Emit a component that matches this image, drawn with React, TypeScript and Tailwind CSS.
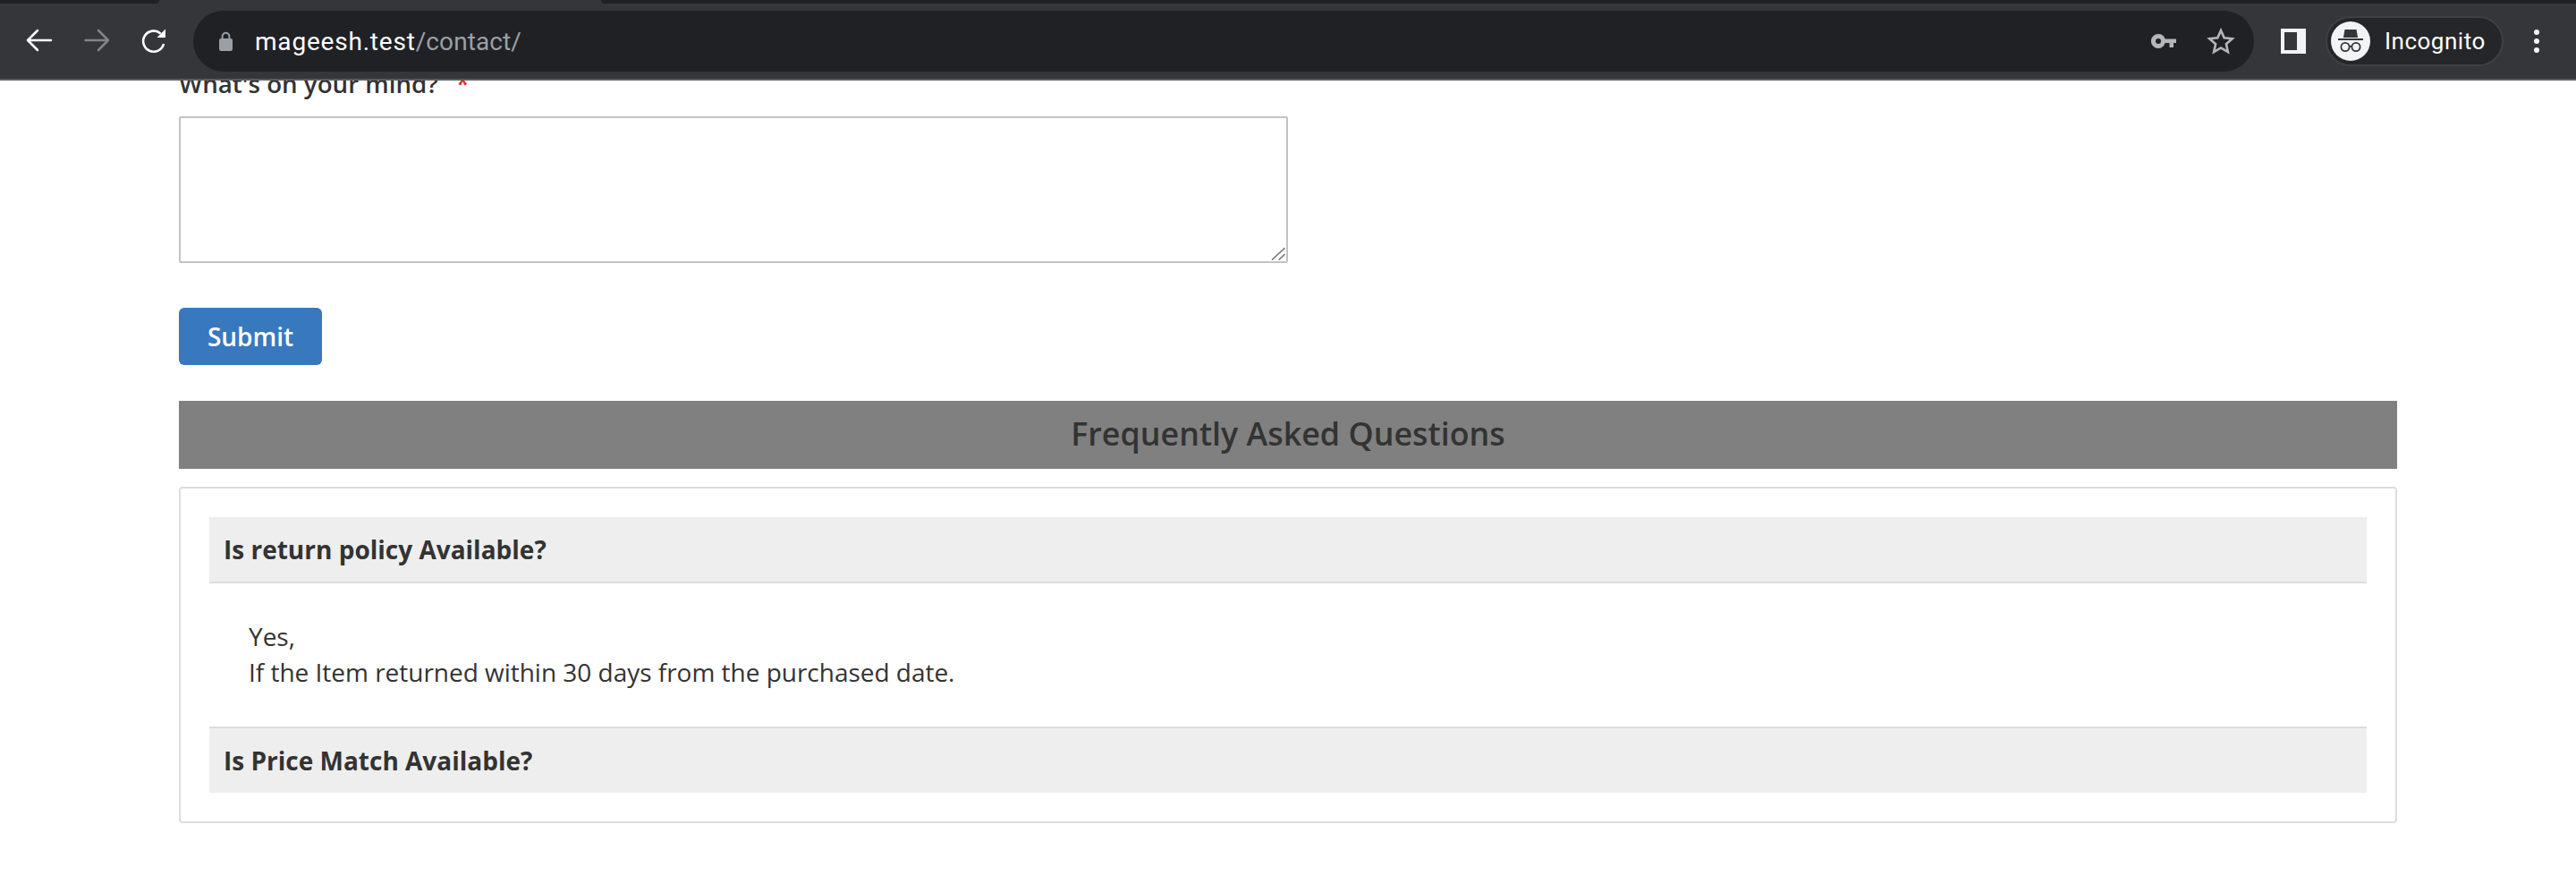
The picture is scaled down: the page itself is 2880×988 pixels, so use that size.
export default function App() {
  return (
    <div className="relative h-[988px] w-[2880px] overflow-hidden bg-white font-['Open_Sans',sans-serif] text-[#333333]">
      <header className="relative z-10 h-[90px] border-b-2 border-[#5b5c5f] bg-[#35363a]">
        <div className="flex h-[4px]">
          <div className="h-full w-[178px] rounded-br-[8px] bg-[#202124]" />
          <div className="ml-auto h-full w-[2208px] rounded-bl-[8px] bg-[#202124]" />
        </div>
        <div className="mt-[8px] flex h-[68px] items-center pl-3 pr-[41px]">
          <div className="flex h-full w-16 items-center justify-center">
            <svg width="32" height="28" viewBox="0 0 32 28" fill="none" stroke="#ffffff" strokeWidth="2.5" strokeLinecap="round" strokeLinejoin="round">
              <path d="M3 13h26M14 2 3 13l11 11" />
            </svg>
          </div>
          <div className="flex h-full w-16 items-center justify-center">
            <svg width="32" height="28" viewBox="0 0 32 28" fill="none" stroke="#84858a" strokeWidth="2.5" strokeLinecap="round" strokeLinejoin="round">
              <path d="M3.5 13H29M18 2l11 11-11 11" />
            </svg>
          </div>
          <div className="flex h-full w-16 items-center justify-center pl-[2px]">
            <svg width="32" height="32" viewBox="0 0 32 32" fill="none">
              <path d="M22.6 7.6A11.6 11.6 0 1 0 26 19" stroke="#ffffff" strokeWidth="2.6" />
              <path d="M28 2.5V12H18.5L28 2.5Z" fill="#ffffff" />
            </svg>
          </div>
          <div className="ml-3 flex h-full flex-1 items-center rounded-full bg-[#202124] pl-[29px] pr-[21px] font-['Roboto',sans-serif]">
            <svg width="15" height="22" viewBox="0 0 15 22" fill="#9aa0a6">
              <path d="M2.6 8V5.6a4.9 4.9 0 0 1 9.8 0V8h.6A2 2 0 0 1 15 10v10a2 2 0 0 1-2 2H2a2 2 0 0 1-2-2V10a2 2 0 0 1 2-2h.6Zm2 0h5.8V5.6a2.9 2.9 0 0 0-5.8 0V8Z" />
            </svg>
            <span className="ml-[25px] whitespace-nowrap pt-[1px] text-[28px] leading-[36px] tracking-[0.8px] text-white">
              mageesh.test<span className="tracking-[0.1px] text-[#9aa0a6]">/contact/</span>
            </span>
            <svg className="ml-auto" width="28" height="16" viewBox="0 0 28 16" fill="#b5b6b8">
              <path fillRule="evenodd" d="M8 0a8 8 0 0 1 7.6 5.5H28V10h-3v5h-4.5v-5h-4.9A8 8 0 1 1 8 0Zm0 5a3 3 0 1 0 0 6 3 3 0 0 0 0-6Z" />
            </svg>
            <svg className="ml-[34px]" width="32" height="30" viewBox="0 0 32 30" fill="none" stroke="#b5b6b8" strokeWidth="2.6" strokeLinejoin="miter">
              <path d="m16 3 3.7 8.3 9 .9-6.8 6 2 8.9L16 22.5l-7.9 4.6 2-8.9-6.8-6 9-.9L16 3Z" />
            </svg>
          </div>
          <div className="ml-[30px] flex h-[28px] w-[28px] justify-start bg-[#f1f3f4] pl-[4px] pt-[4px]">
            <div className="h-[20px] w-[14px] bg-[#35363a]" />
          </div>
          <div className="ml-[22px] flex h-[56px] w-[199px] items-center rounded-full border-2 border-[#3f4044] bg-[#252629] pl-[4px] font-['Roboto',sans-serif]">
            <div className="flex h-[44px] w-[44px] items-center justify-center rounded-full bg-[#f1f3f4]">
              <svg width="30" height="34" viewBox="0 0 30 34" fill="none">
                <path d="M8.5 4h13l1.6 9H6.9L8.5 4Z" fill="#35363a" />
                <path d="M1 15h28" stroke="#35363a" strokeWidth="2" />
                <circle cx="9" cy="23.5" r="4.6" stroke="#35363a" strokeWidth="1.8" />
                <circle cx="21" cy="23.5" r="4.6" stroke="#35363a" strokeWidth="1.8" />
                <path d="M13.5 22.8h3" stroke="#35363a" strokeWidth="1.8" />
              </svg>
            </div>
            <span className="ml-[16px] text-[26px] leading-[34px] tracking-[0.5px] text-white">Incognito</span>
          </div>
          <div className="ml-[34px] flex w-[6px] flex-col gap-[4px]">
            <div className="h-[6px] w-[6px] rounded-full bg-[#f1f3f4]" />
            <div className="h-[6px] w-[6px] rounded-full bg-[#f1f3f4]" />
            <div className="h-[6px] w-[6px] rounded-full bg-[#f1f3f4]" />
          </div>
        </div>
      </header>

      <main className="px-[200px]">
        <div className="-mt-[17px] mb-[17px] flex h-[40px] items-center text-[27.7px] font-semibold leading-[40px]">
          <span>What's on your mind?</span>
          <span className="ml-[20px] text-[#e02b27]">*</span>
        </div>

        <div className="relative h-[164px] w-[1240px]">
          <textarea className="block h-full w-full resize-none rounded-[2px] border-2 border-[#c2c2c2] bg-white" />
          <svg className="absolute bottom-[3px] right-[3px]" width="16" height="15" viewBox="0 0 16 15" fill="none" stroke="#6b6b6b" strokeWidth="1.4">
            <path d="M1 14.5 15.5 1M8.5 14.5l7-6.5" />
          </svg>
        </div>

        <button className="mt-[50px] block h-[64px] w-[160px] rounded-[6px] bg-[#3778bf] pb-[1px] text-[28px] font-semibold leading-[40px] text-white">
          Submit
        </button>

        <h2 className="mt-[40px] flex h-[76px] items-center justify-center bg-[#808080] pb-[2px] text-[35.85px] font-semibold leading-[48px] text-[#333333]">
          Frequently Asked Questions
        </h2>

        <section className="mt-[20px] rounded-[4px] border-2 border-[#dddddd] p-[32px]">
          <div className="flex h-[74px] items-center border-b-2 border-[#dddddd] bg-[#eeeeee] pb-[1px] pl-[16px] text-[28px] font-bold leading-[40px]">
            Is return policy Available?
          </div>
          <div className="pb-[41px] pl-[44px] pt-[39px] text-[28px] leading-[40px] tracking-[-0.02px]">
            <p>Yes,</p>
            <p>If the Item returned within 30 days from the purchased date.</p>
          </div>
          <div className="flex h-[74px] items-center border-t-2 border-[#dddddd] bg-[#eeeeee] pb-[1px] pl-[16px] text-[28px] font-bold leading-[40px]">
            Is Price Match Available?
          </div>
        </section>
      </main>
    </div>
  );
}
